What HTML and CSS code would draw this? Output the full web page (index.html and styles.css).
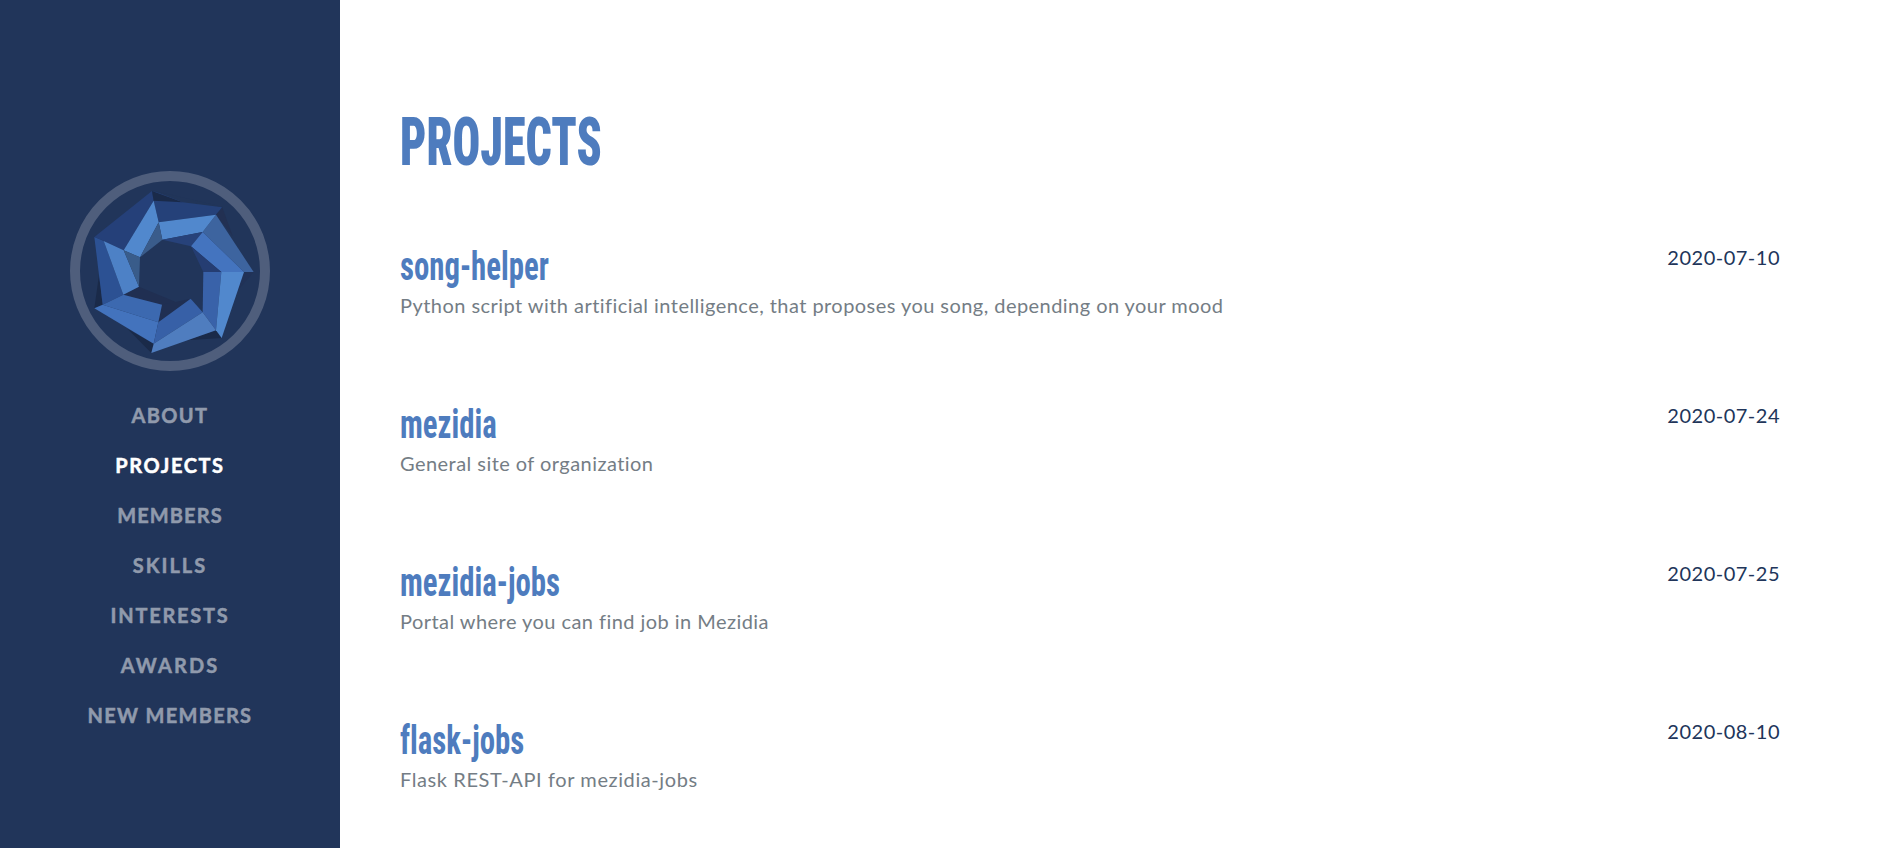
FILE: index.html
```html
<!DOCTYPE html>
<html lang="en">
<head>
<meta charset="utf-8">
<title>Mezidia</title>
<link rel="stylesheet" href="styles.css">
</head>
<body>
<nav class="sidebar">
  <div class="avatar">
    <svg viewBox="60 63 540 540" width="180" height="180" aria-hidden="true">
      <g fill="#1a2a49">
        <path d="M276 93L368 127L282 122Z"/>
        <path d="M103 231L196 173L131 241Z"/>
        <path d="M117 345L103 445L128 434Z"/>
        <path d="M203 507L274 579L281 551Z"/>
        <path d="M380 541L485 534L468 511Z"/>
      </g>
      <path fill="#213257" d="M581 336L530 395L552 336Z"/>
      <path fill="#202f52" d="M237 380L190 404L306 434L346 425ZM306 434L392 416L295 487Z"/>
      <path fill="#254079" d="M276 93L103 231L131 243L191 271L281 122Z"/>
      <path fill="#254179" d="M281 122L276 93L487 142L468 164L296 187Z"/>
      <path fill="#1a2a49" d="M276 93L368 127L281 122Z"/>
      <path fill="#213559" d="M276 91L487 140L487 142L368 127Z"/>
      <path fill="#223052" d="M487 142L518 228L468 164Z"/>
      <path fill="#3d649f" d="M468 164L581 336H552L428 216Z"/>
      <path fill="#5188cd" d="M281 122L296 187L240 292L191 271Z"/>
      <path fill="#5188cd" d="M296 187L468 164L428 216L307 239Z"/>
      <path fill="#3a5c8b" d="M296 187L307 239L240 292Z"/>
      <path fill="#27427a" d="M307 239L428 216L393 259Z"/>
      <path fill="#4474bf" d="M428 216L552 336H484L393 259Z"/>
      <path fill="#253d72" d="M393 259L484 336H430Z"/>
      <path fill="#2c5193" d="M103 231L131 243L190 404L128 434Z"/>
      <path fill="#4d81c6" d="M131 243L191 271L237 380L190 404Z"/>
      <path fill="#395c8a" d="M191 271L240 292L237 380Z"/>
      <path fill="#3c69b0" d="M190 404L306 434L295 487L128 434Z"/>
      <path fill="#4373bd" d="M128 434L295 487L281 551L103 445Z"/>
      <path fill="#3962a9" d="M430 336H484L468 511L428 457Z"/>
      <path fill="#5188cd" d="M484 336H552L485 534L468 511Z"/>
      <path fill="#3760a7" d="M295 487L392 416L428 457L281 551Z"/>
      <path fill="#4f7dbf" d="M428 457L468 511L274 579L281 551Z"/>
    </svg>
  </div>
  <ul class="menu">
    <li class="about">About</li>
    <li class="projects active">Projects</li>
    <li class="members">Members</li>
    <li class="skills">Skills</li>
    <li class="interests">Interests</li>
    <li class="awards">Awards</li>
    <li class="new-members">New Members</li>
  </ul>
</nav>
<main class="content">
  <h2 class="title"><span>Projects</span></h2>
  <article class="project">
    <div><h3><span>song-helper</span></h3><p>Python script with artificial intelligence, that proposes you song, depending on your mood</p></div>
    <time>2020-07-10</time>
  </article>
  <article class="project">
    <div><h3><span>mezidia</span></h3><p>General site of organization</p></div>
    <time>2020-07-24</time>
  </article>
  <article class="project">
    <div><h3><span>mezidia-jobs</span></h3><p>Portal where you can find job in Mezidia</p></div>
    <time>2020-07-25</time>
  </article>
  <article class="project flask">
    <div><h3><span>flask-jobs</span></h3><p>Flask REST-API for mezidia-jobs</p></div>
    <time>2020-08-10</time>
  </article>
</main>
</body>
</html>
```
FILE: styles.css
```css
* { box-sizing: border-box; }
body {
  margin: 0;
  height: 848px;
  display: flex;
  overflow: hidden;
  background: #fff;
  color: #21355a;
  font: 20px/30px Lato, sans-serif;
}
.sidebar {
  width: 340px;
  flex: none;
  padding-top: 171px;
  background: #21355a;
  display: flex;
  flex-direction: column;
  align-items: center;
}
.avatar {
  width: 200px;
  height: 200px;
  border: 10px solid #4f5e7c;
  border-radius: 50%;
}
.avatar svg { display: block; }
.menu {
  list-style: none;
  margin: 19px 0 0;
  padding: 0;
  text-align: center;
  text-transform: uppercase;
  font-weight: 700;
  line-height: 50px;
  color: #909aac;
  -webkit-text-stroke: .5px currentColor;
}
.menu .active { color: #fff; }
.about { letter-spacing: 1.4px; }
.projects { letter-spacing: 1.6px; }
.members { letter-spacing: 1.1px; }
.skills { letter-spacing: 2px; }
.interests { letter-spacing: 1.75px; }
.awards { letter-spacing: 2.1px; }
.new-members { letter-spacing: 1.3px; }
.content {
  flex: 1;
  padding: 102px 119px 0 60px;
}
.title, .project h3 {
  margin: 0;
  font-family: Roboto, sans-serif;
  font-weight: 700;
  font-stretch: 75%;
  font-variant-ligatures: none;
  color: #4e7cbe;
  white-space: nowrap;
}
.title {
  margin-bottom: 60px;
  font-size: 67.5px;
  font-weight: 900;
  line-height: 80px;
  text-transform: uppercase;
}
.title span, .project h3 span {
  display: inline-block;
  transform-origin: left;
}
.title span { transform: scaleX(.682); }
.project h3 span { transform: translateY(1px) scaleX(.77); }
.project {
  display: flex;
  justify-content: space-between;
  margin-bottom: 80px;
}
.project h3 { font-size: 40px; line-height: 48px; }
.project p { margin: 0; color: #747d85; letter-spacing: .45px; }
.project time { letter-spacing: .5px; }
.flask p { letter-spacing: .6px; }
```
